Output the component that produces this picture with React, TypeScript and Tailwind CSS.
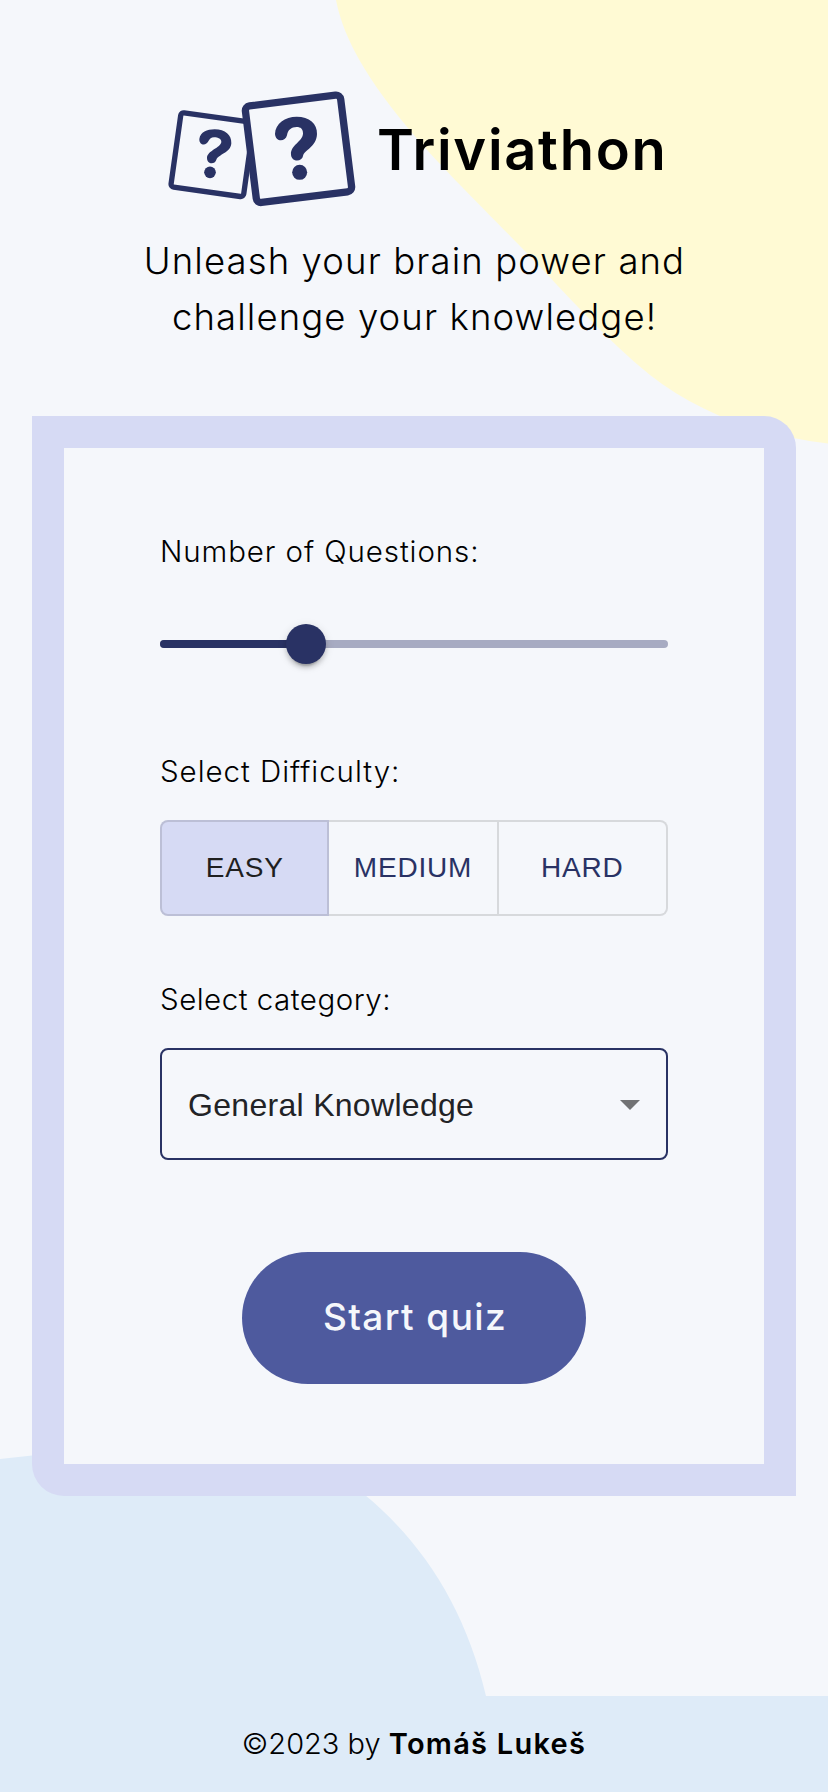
import { useState } from "react";

const difficulties = ["EASY", "MEDIUM", "HARD"];

function Blobs() {
  return (
    <svg
      className="pointer-events-none absolute inset-0 -z-10"
      width="828"
      height="1792"
      viewBox="0 0 828 1792"
      aria-hidden="true"
    >
      <path
        fill="#fffad4"
        d="M336 0C342 30 358 68 408 128C436 162 480 205 520 246C560 287 604 338 650 375C700 414 762 436 828 443.5V0Z"
      />
      <path
        fill="#deebf8"
        d="M0 1459L32 1455.5C150 1440 275 1420 365 1495C424 1544 466 1610 486 1696H0Z"
      />
    </svg>
  );
}

function Logo() {
  return (
    <svg width="188" height="116" viewBox="54 60 564 348" className="shrink-0 overflow-visible" aria-hidden="true">
      <g fill="#f5f7fb" stroke="#293264">
        <rect x="76.7" y="141.5" width="220" height="225" rx="9" strokeWidth="16" transform="rotate(8 186.7 254)" />
        <rect x="301.5" y="90.5" width="288" height="292" rx="14" strokeWidth="22" transform="rotate(-7.1 445.5 236.5)" />
      </g>
      <g fill="#293264">
        <path d="M148 207C151 186 171 178 194 178C226 178 245 195 244 220C242 249 205 253 199 269C195 284 171 284 171 264C172 241 212 234 214 216C214 207 205 202 192 202C183 202 180 206 175 214C169 228 147 227 148 207Z" />
        <circle cx="180" cy="307" r="17.5" />
        <path d="M375 192C376 160 405 140 440 140C478 140 502 160 501 192C500 230 463 240 459 258C456 276 425 277 423 254C421 225 459 215 459 190C459 177 452 171 440 171C424 171 413 180 411 196C406 216 377 217 375 192Z" />
        <circle cx="449" cy="307" r="22.5" />
      </g>
    </svg>
  );
}

export default function App() {
  const [difficulty, setDifficulty] = useState("EASY");

  return (
    <div className="relative isolate flex min-h-[1792px] w-full flex-col overflow-hidden bg-[#f5f7fb] font-[Inter,sans-serif] text-black">
      <Blobs />

      <header className="flex flex-col pt-[90px]">
        <div className="flex h-[116px] items-center gap-[21px] pl-[168px]">
          <Logo />
          <h1 className="pt-[4px] text-[56px] leading-[64px] font-semibold tracking-[1.7px]">Triviathon</h1>
        </div>
        <p className="mt-[27px] pl-[1px] text-center text-[36.5px] leading-[56px] font-light tracking-[1.1px]">
          Unleash your brain power and
          <br />
          challenge your knowledge!
        </p>
      </header>

      <main className="mx-8 mt-[71px] flex h-[1080px] flex-col rounded-tr-[32px] rounded-bl-[32px] bg-[#d6daf4] p-8">
        <form className="flex flex-1 flex-col bg-[#f5f7fb] px-24 pt-[81px]" onSubmit={(e) => e.preventDefault()}>
          <label className="text-[29.5px] leading-[44px] font-light tracking-[0.9px]">Number of Questions:</label>
          <div className="relative mt-[51px] flex h-10 items-center">
            <div className="h-2 w-full rounded-full bg-[#a7abc2]">
              <div className="h-2 w-[28.57%] rounded-full bg-[#293264]" />
            </div>
            <div className="absolute left-[28.7%] size-10 -translate-x-1/2 rounded-full bg-[#293264] shadow-[0_6px_2px_-4px_rgba(0,0,0,0.2),0_4px_4px_0_rgba(0,0,0,0.14),0_2px_10px_0_rgba(0,0,0,0.12)]" />
          </div>

          <label className="mt-[85px] text-[29.5px] leading-[44px] font-light tracking-[0.95px]">Select Difficulty:</label>
          <div className="mt-[27px] grid h-24 grid-cols-3 font-['Liberation_Sans',Arial,sans-serif] text-[28px] tracking-[0.8px]">
            {difficulties.map((d) => (
              <button
                key={d}
                type="button"
                onClick={() => setDifficulty(d)}
                className={
                  "border-y-2 border-r-2 border-black/12 first:rounded-l-lg first:border-l-2 last:rounded-r-lg " +
                  (d === difficulty ? "bg-[#d6daf4] text-[#1f1f1f]" : "text-[#293264]")
                }
              >
                {d}
              </button>
            ))}
          </div>

          <label className="mt-[61px] text-[29.5px] leading-[44px] font-light tracking-[0.5px]">Select category:</label>
          <button
            type="button"
            className="mt-[27px] flex h-28 items-center justify-between rounded-lg border-2 border-[#293264] px-[26px] pt-[2px] font-['Liberation_Sans',Arial,sans-serif] text-[32px] tracking-[0.3px] text-[#222326]"
          >
            General Knowledge
            <svg width="20" height="10" viewBox="0 0 20 10" aria-hidden="true">
              <path d="M0 0H20L10 10Z" fill="#717274" />
            </svg>
          </button>

          <button
            type="submit"
            className="mt-[92px] h-[132px] w-[344px] self-center rounded-full bg-[#4e5a9e] pb-[2px] pl-[2px] text-[37px] font-medium tracking-[1.4px] text-[#f5f7fb]"
          >
            Start quiz
          </button>
        </form>
      </main>

      <footer className="mt-[200px] flex h-24 items-center justify-center bg-[#deebf8] text-[29px] font-light">
        <p className="whitespace-pre">
          <span>©2023 by </span>
          <strong className="font-semibold tracking-[1.25px]">Tomáš Lukeš</strong>
        </p>
      </footer>
    </div>
  );
}
